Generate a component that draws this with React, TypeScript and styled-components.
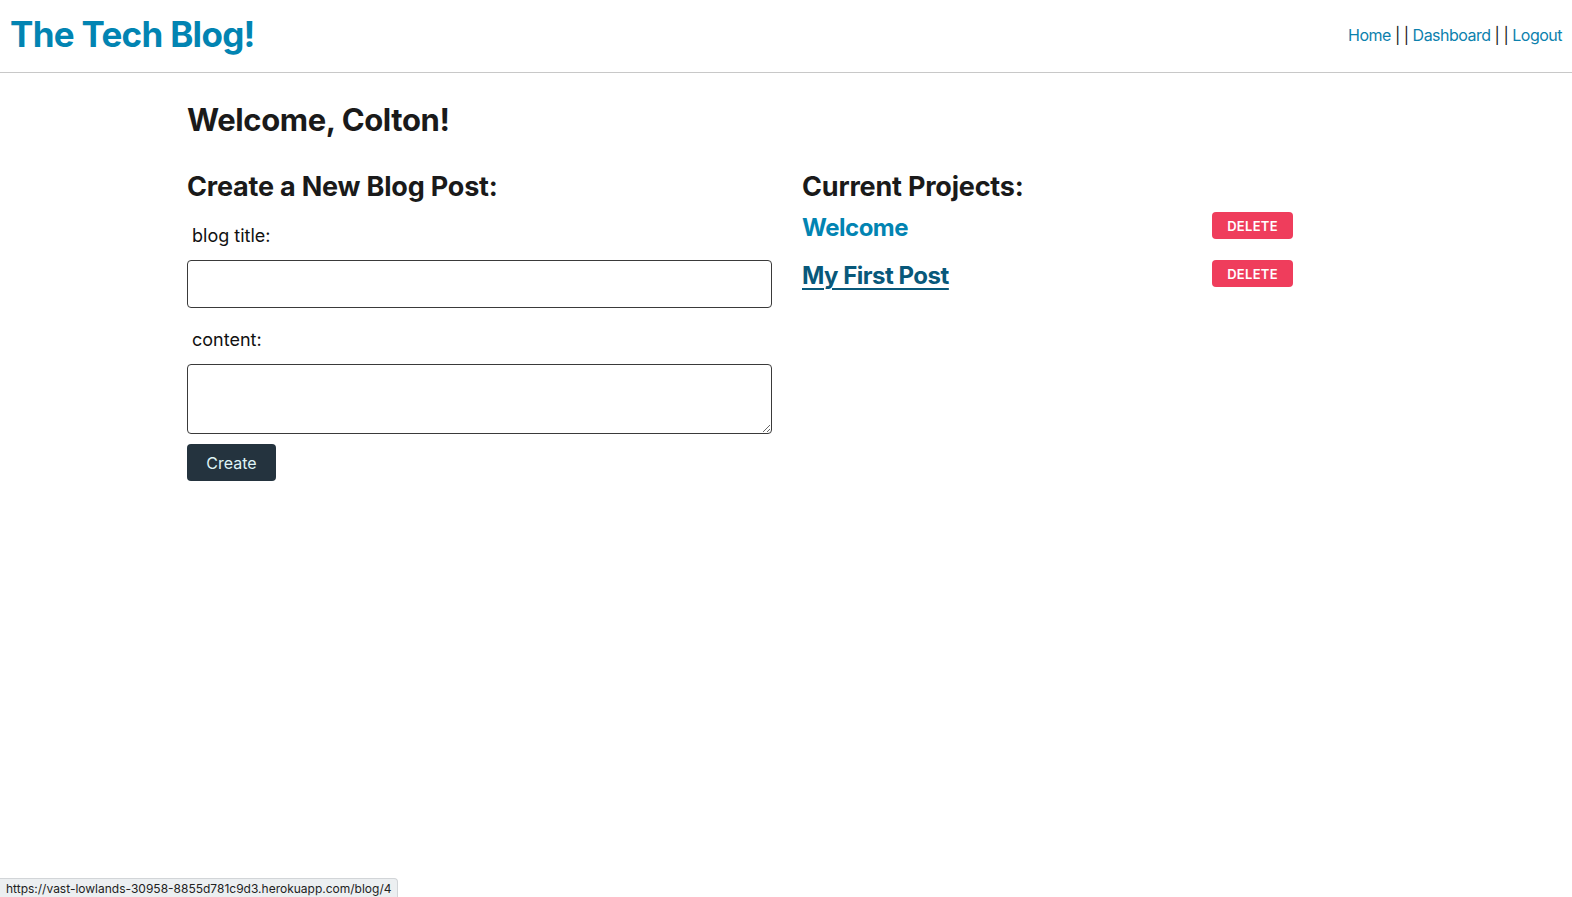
import styled, { createGlobalStyle } from 'styled-components';

const GlobalStyle = createGlobalStyle`
  html, body {
    margin: 0;
    padding: 0;
    background: #ffffff;
    font-family: Inter, "Liberation Sans", sans-serif;
    color: #1a1a1a;
  }
  * {
    box-sizing: border-box;
  }
`;

const posts = [
  { id: 1, title: 'Welcome', visited: false },
  { id: 4, title: 'My First Post', visited: true },
];

const App = () => {
  return (
    <>
      <GlobalStyle />
      <Header>
        <Brand href="#">The Tech Blog!</Brand>
        <Nav>
          <NavLink href="#">Home</NavLink>
          <Sep>| |</Sep>
          <NavLink href="#">Dashboard</NavLink>
          <Sep>| |</Sep>
          <NavLink href="#">Logout</NavLink>
        </Nav>
      </Header>
      <Main>
        <Welcome>Welcome, Colton!</Welcome>
        <Columns>
          <Form onSubmit={(e) => e.preventDefault()}>
            <SectionTitle>Create a New Blog Post:</SectionTitle>
            <Label htmlFor="blog-title" $first>
              blog title:
            </Label>
            <Input id="blog-title" type="text" />
            <Label htmlFor="blog-content">content:</Label>
            <TextArea id="blog-content" />
            <CreateButton type="submit">Create</CreateButton>
          </Form>
          <Projects>
            <SectionTitle>Current Projects:</SectionTitle>
            {posts.map((post) => (
              <ProjectRow key={post.id}>
                <ProjectLink href="#" $active={post.visited}>
                  {post.title}
                </ProjectLink>
                <DeleteButton type="button">Delete</DeleteButton>
              </ProjectRow>
            ))}
          </Projects>
        </Columns>
      </Main>
      <StatusBar>https://vast-lowlands-30958-8855d781c9d3.herokuapp.com/blog/4</StatusBar>
    </>
  );
};

export default App;

const Header = styled.header`
  height: 73px;
  display: flex;
  align-items: center;
  justify-content: space-between;
  padding: 0 10px 4px 10px;
  border-bottom: 1px solid #c8c8c8;
`;

const Brand = styled.a`
  font-size: 35px;
  font-weight: 700;
  letter-spacing: -0.7px;
  color: #0284b2;
  text-decoration: none;
`;

const Nav = styled.nav`
  display: flex;
  align-items: center;
  gap: 4px;
  font-size: 16px;
  letter-spacing: -0.5px;
  padding-top: 2px;
`;

const NavLink = styled.a`
  color: #0c81ad;
  text-decoration: none;
`;

const Sep = styled.span`
  color: #1a1a1a;
`;

const Main = styled.main`
  padding: 28px 187px 0 187px;
`;

const Welcome = styled.h1`
  margin: 0 0 32px 0;
  font-size: 31px;
  font-weight: 700;
  letter-spacing: -0.4px;
  line-height: 38px;
`;

const Columns = styled.div`
  display: grid;
  grid-template-columns: 585px 490px;
  column-gap: 30px;
`;

const SectionTitle = styled.h2`
  margin: 0;
  font-size: 27px;
  font-weight: 700;
  letter-spacing: -0.2px;
  line-height: 32px;
`;

const Form = styled.form`
  display: flex;
  flex-direction: column;
`;

const Label = styled.label<{ $first?: boolean }>`
  margin: ${(props) => (props.$first ? '22px' : '21px')} 0 13px 5px;
  font-size: 18px;
  line-height: 22px;
  color: #111111;
`;

const Input = styled.input`
  width: 100%;
  height: 48px;
  border: 1px solid #3a3a3a;
  border-radius: 4px;
  padding: 0 12px;
  font-size: 16px;
  font-family: inherit;
`;

const TextArea = styled.textarea`
  width: 100%;
  height: 70px;
  border: 1px solid #3a3a3a;
  border-radius: 4px;
  padding: 8px 12px;
  font-size: 16px;
  font-family: inherit;
  resize: vertical;
  display: block;
`;

const CreateButton = styled.button`
  align-self: flex-start;
  margin-top: 10px;
  width: 89px;
  height: 37px;
  border: none;
  border-radius: 4px;
  background: #24333e;
  color: #dff4f6;
  font-size: 16px;
  font-family: inherit;
`;

const Projects = styled.section`
  display: flex;
  flex-direction: column;
`;

const ProjectRow = styled.div`
  display: flex;
  justify-content: space-between;
  align-items: flex-start;
  margin-top: 10px;
  height: 38px;
  width: 491px;
`;

const ProjectLink = styled.a<{ $active: boolean }>`
  font-size: 24px;
  font-weight: 700;
  letter-spacing: -0.5px;
  line-height: 30px;
  color: ${(props) => (props.$active ? '#08587a' : '#0284b2')};
  text-decoration: ${(props) => (props.$active ? 'underline' : 'none')};
  text-underline-offset: 4px;
  text-decoration-thickness: 2px;
`;

const DeleteButton = styled.button`
  margin-top: -1px;
  width: 81px;
  height: 27px;
  border: none;
  border-radius: 4px;
  background: #ef3d5c;
  color: #ffffff;
  font-size: 13px;
  font-weight: 600;
  font-family: inherit;
  letter-spacing: 0.3px;
  text-transform: uppercase;
`;

const StatusBar = styled.div`
  position: fixed;
  left: 0;
  bottom: 0;
  height: 19px;
  padding: 0 6px;
  display: flex;
  align-items: center;
  background: #eceff1;
  border: 1px solid #d2d5d8;
  border-left: none;
  border-bottom: none;
  border-top-right-radius: 4px;
  font-size: 12px;
  color: #222222;
`;
